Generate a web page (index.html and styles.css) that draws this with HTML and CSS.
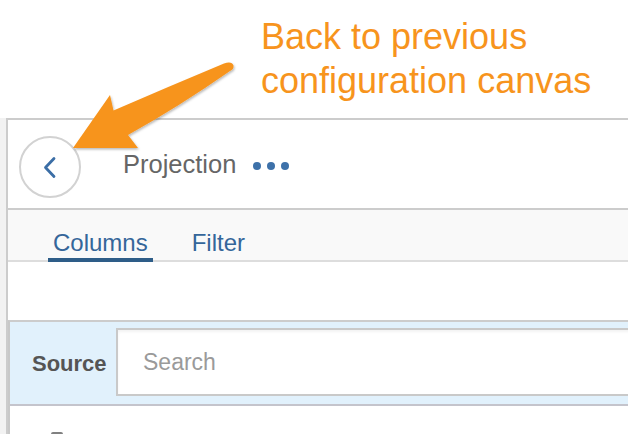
FILE: index.html
```html
<!DOCTYPE html>
<html lang="en">
<head>
<meta charset="utf-8">
<title>Projection</title>
<link rel="stylesheet" href="styles.css">
</head>
<body>
<div class="page">
  <header class="callout">
    <p class="callout-text">Back to previous<br>configuration canvas</p>
  </header>
  <div class="app">
    <div class="gutter"></div>
    <section class="panel">
      <div class="panel-head">
        <button class="back-btn" type="button" aria-label="Back">
          <svg class="back-icon" width="58" height="58" viewBox="0 0 58 58">
            <path d="M33 20.5 L24.5 29.5 L33 38.5" fill="none" stroke="#3b6ea6" stroke-width="2.8" stroke-linecap="round" stroke-linejoin="round"/>
          </svg>
        </button>
        <h1 class="title">Projection</h1>
        <div class="more"><span class="dot"></span><span class="dot"></span><span class="dot"></span></div>
      </div>
      <nav class="tabs">
        <a class="tab tab-active">Columns</a>
        <a class="tab">Filter</a>
      </nav>
      <div class="spacer"></div>
      <div class="source">
        <div class="source-bar">
          <label class="source-label" for="search">Source</label>
          <input class="search" id="search" type="text" placeholder="Search">
        </div>
        <div class="source-list">
          <span class="checkbox"></span>
        </div>
      </div>
    </section>
  </div>
  <svg class="arrow" width="628" height="434" viewBox="0 0 628 434">
    <defs>
      <filter id="sh" x="-20%" y="-20%" width="140%" height="140%">
        <feDropShadow dx="1" dy="1.5" stdDeviation="1.2" flood-color="#000" flood-opacity="0.28"/>
      </filter>
    </defs>
    <path filter="url(#sh)" fill="#f7941d" d="M73 148 L110 95 L113.5 110.5 Q170 86 224 63.5 Q232 61 233.5 65.5 Q234 69.5 230 71 Q180 106 128 135 L138 148 Z"/>
  </svg>
</div>
</body>
</html>
```
FILE: styles.css
```css
html, body {
  margin: 0;
  padding: 0;
  background: #ffffff;
}
body {
  width: 628px;
  height: 434px;
  overflow: hidden;
  font-family: "Liberation Sans", Arial, Helvetica, sans-serif;
}
.page {
  position: relative;
  width: 628px;
  height: 434px;
  overflow: hidden;
}
.callout {
  height: 118px;
  box-sizing: border-box;
  padding: 15px 0 0 261px;
}
.callout-text {
  margin: 0;
  font-size: 36px;
  line-height: 44px;
  color: #f7941d;
  white-space: nowrap;
}
.app {
  display: flex;
  width: 690px;
  height: 316px;
}
.gutter {
  flex: 0 0 6px;
  background: #f2f2f2;
}
.panel {
  flex: 1;
  display: flex;
  flex-direction: column;
  border-top: 2px solid #cccccc;
  border-left: 2px solid #cccccc;
  background: #ffffff;
  min-height: 0;
  overflow: hidden;
}
.panel > * {
  flex-shrink: 0;
}
.panel-head {
  height: 90px;
  box-sizing: border-box;
  padding: 16px 0 0 11px;
  display: flex;
  align-items: flex-start;
  border-bottom: 2px solid #cccccc;
}
.back-btn {
  width: 62px;
  height: 62px;
  box-sizing: border-box;
  border: 2px solid #d2d2d2;
  border-radius: 50%;
  background: #ffffff;
  padding: 0;
  margin: 0;
  flex: 0 0 auto;
}
.back-icon {
  display: block;
}
.title {
  margin: 14px 0 0 42px;
  font-size: 25.5px;
  line-height: 28px;
  font-weight: normal;
  color: #666666;
}
.more {
  display: flex;
  gap: 6px;
  margin: 26px 0 0 17px;
}
.dot {
  width: 8px;
  height: 8px;
  border-radius: 50%;
  background: #3d71a9;
}
.tabs {
  height: 50px;
  display: flex;
  align-items: flex-start;
  gap: 34px;
  padding-left: 40px;
  background: #f9f9f9;
  border-bottom: 2px solid #dddddd;
}
.tab {
  padding: 19px 5px 1px;
  margin-bottom: -2px;
  font-size: 24px;
  line-height: 28px;
  color: #35669a;
  border-bottom: 4px solid transparent;
}
.tab-active {
  border-bottom-color: #2e5d88;
}
.spacer {
  height: 58px;
}
.source {
  flex: 1 0 auto;
  border-top: 2px solid #cccccc;
  border-left: 2px solid #c8c8c8;
}
.source-bar {
  display: flex;
  align-items: center;
  padding: 6px 0 8px;
  background: #e1f1fc;
  border-bottom: 2px solid #c4c4cc;
}
.source-label {
  flex: 0 0 106px;
  box-sizing: border-box;
  padding: 3px 0 0 22px;
  font-size: 22px;
  font-weight: bold;
  color: #555555;
}
.search {
  flex: 1;
  height: 68px;
  box-sizing: border-box;
  margin: 0;
  padding: 0 0 0 25px;
  border: 2px solid #c9c9c9;
  border-radius: 0;
  background: #ffffff;
  box-shadow: inset 0 2px 3px rgba(0, 0, 0, 0.05);
  font-family: "Liberation Sans", Arial, Helvetica, sans-serif;
  font-size: 23px;
  color: #333333;
  outline: none;
}
.search::placeholder {
  color: #9a9a9a;
}
.source-list {
  padding: 26px 0 0 41px;
}
.checkbox {
  display: block;
  width: 12px;
  height: 12px;
  box-sizing: border-box;
  border: 2px solid #808080;
  border-radius: 2px;
}
.arrow {
  position: absolute;
  left: 0;
  top: 0;
  pointer-events: none;
}
```
